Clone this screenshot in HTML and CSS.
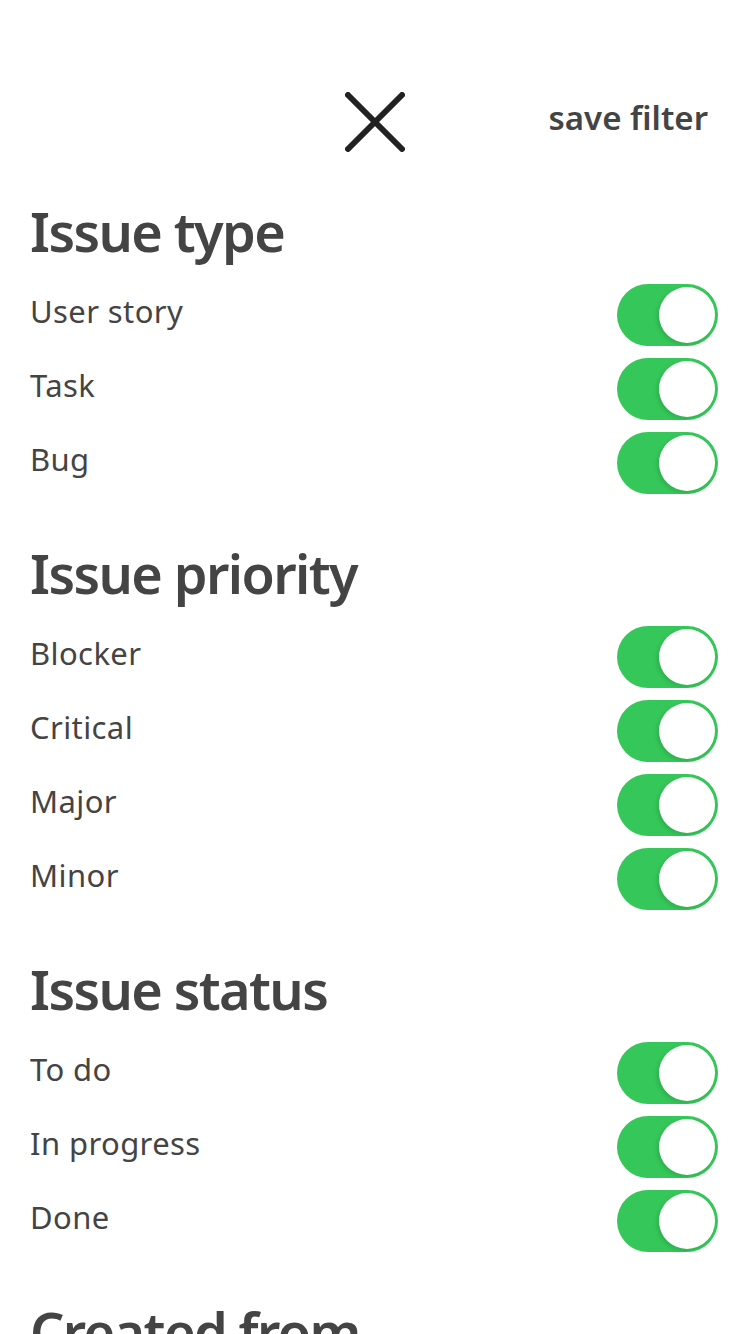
FILE: index.html
```html
<!DOCTYPE html>
<html lang="en">

<head>
    <meta charset="UTF-8">
    <meta name="viewport" content="width=device-width, initial-scale=1.0">
    <title>Filter</title>
    <link rel="stylesheet" href="styles.css">
</head>

<body>
    <main>
        <header class="topBar">
            <span></span>
            <button class="closeBtn" aria-label="close">
                <svg width="60" height="60" viewBox="0 0 60 60">
                    <path d="M3 3 L57 57 M57 3 L3 57" stroke="#222" stroke-width="6" stroke-linecap="round" fill="none" />
                </svg>
            </button>
            <a class="saveFilter" href="#">save filter</a>
        </header>

        <section class="filterGroup">
            <h2>Issue type</h2>
            <div class="row"><span class="rowLabel">User story</span><span class="switch on"></span></div>
            <div class="row"><span class="rowLabel">Task</span><span class="switch on"></span></div>
            <div class="row"><span class="rowLabel">Bug</span><span class="switch on"></span></div>
        </section>

        <section class="filterGroup">
            <h2>Issue priority</h2>
            <div class="row"><span class="rowLabel">Blocker</span><span class="switch on"></span></div>
            <div class="row"><span class="rowLabel">Critical</span><span class="switch on"></span></div>
            <div class="row"><span class="rowLabel">Major</span><span class="switch on"></span></div>
            <div class="row"><span class="rowLabel">Minor</span><span class="switch on"></span></div>
        </section>

        <section class="filterGroup">
            <h2>Issue status</h2>
            <div class="row"><span class="rowLabel">To do</span><span class="switch on"></span></div>
            <div class="row"><span class="rowLabel">In progress</span><span class="switch on"></span></div>
            <div class="row"><span class="rowLabel">Done</span><span class="switch on"></span></div>
        </section>

        <section class="filterGroup">
            <h2>Created from</h2>
        </section>
    </main>
</body>

</html>
```

FILE: styles.css
```css
body {
    margin: 0px;
    padding: 0px;
    background: #fff;
    color: #444;
    font-family: "Noto Sans", "Open Sans", "Noto Sans CJK KR", sans-serif;
}

main {
    padding: 92px 32px 40px 30px;
}

.topBar {
    display: grid;
    grid-template-columns: 1fr auto 1fr;
    align-items: center;
    height: 60px;
    margin-bottom: 47px;
}

.closeBtn {
    border: none;
    background: none;
    padding: 0px;
    width: 60px;
    height: 60px;
    margin-left: 2px;
}

.closeBtn svg {
    display: block;
}

.saveFilter {
    justify-self: end;
    margin-right: 10px;
    padding-bottom: 8px;
    color: #444;
    text-decoration: none;
    font-size: 33px;
    font-weight: 600;
    line-height: 40px;
}

.filterGroup {
    display: flex;
    flex-direction: column;
    gap: 12px;
    margin-bottom: 47px;
}

.filterGroup h2 {
    margin: 0px 0px 9px 0px;
    font-size: 54px;
    font-weight: 600;
    letter-spacing: -1.6px;
    line-height: 64px;
    color: #444;
}

.row {
    display: flex;
    align-items: center;
    justify-content: space-between;
    height: 62px;
}

.rowLabel {
    font-size: 31px;
    letter-spacing: 0.4px;
    line-height: 36px;
    padding-bottom: 9px;
}

.switch {
    position: relative;
    width: 101px;
    height: 62px;
    border-radius: 31px;
    background: #e5e5e5;
}

.switch::after {
    content: "";
    position: absolute;
    top: 3px;
    left: 3px;
    width: 56px;
    height: 56px;
    border-radius: 50%;
    background: #fff;
    box-shadow: -2px 2px 4px rgba(0, 0, 0, 0.12);
}

.switch.on {
    background: #35c759;
}

.switch.on::after {
    left: 42px;
}
```
